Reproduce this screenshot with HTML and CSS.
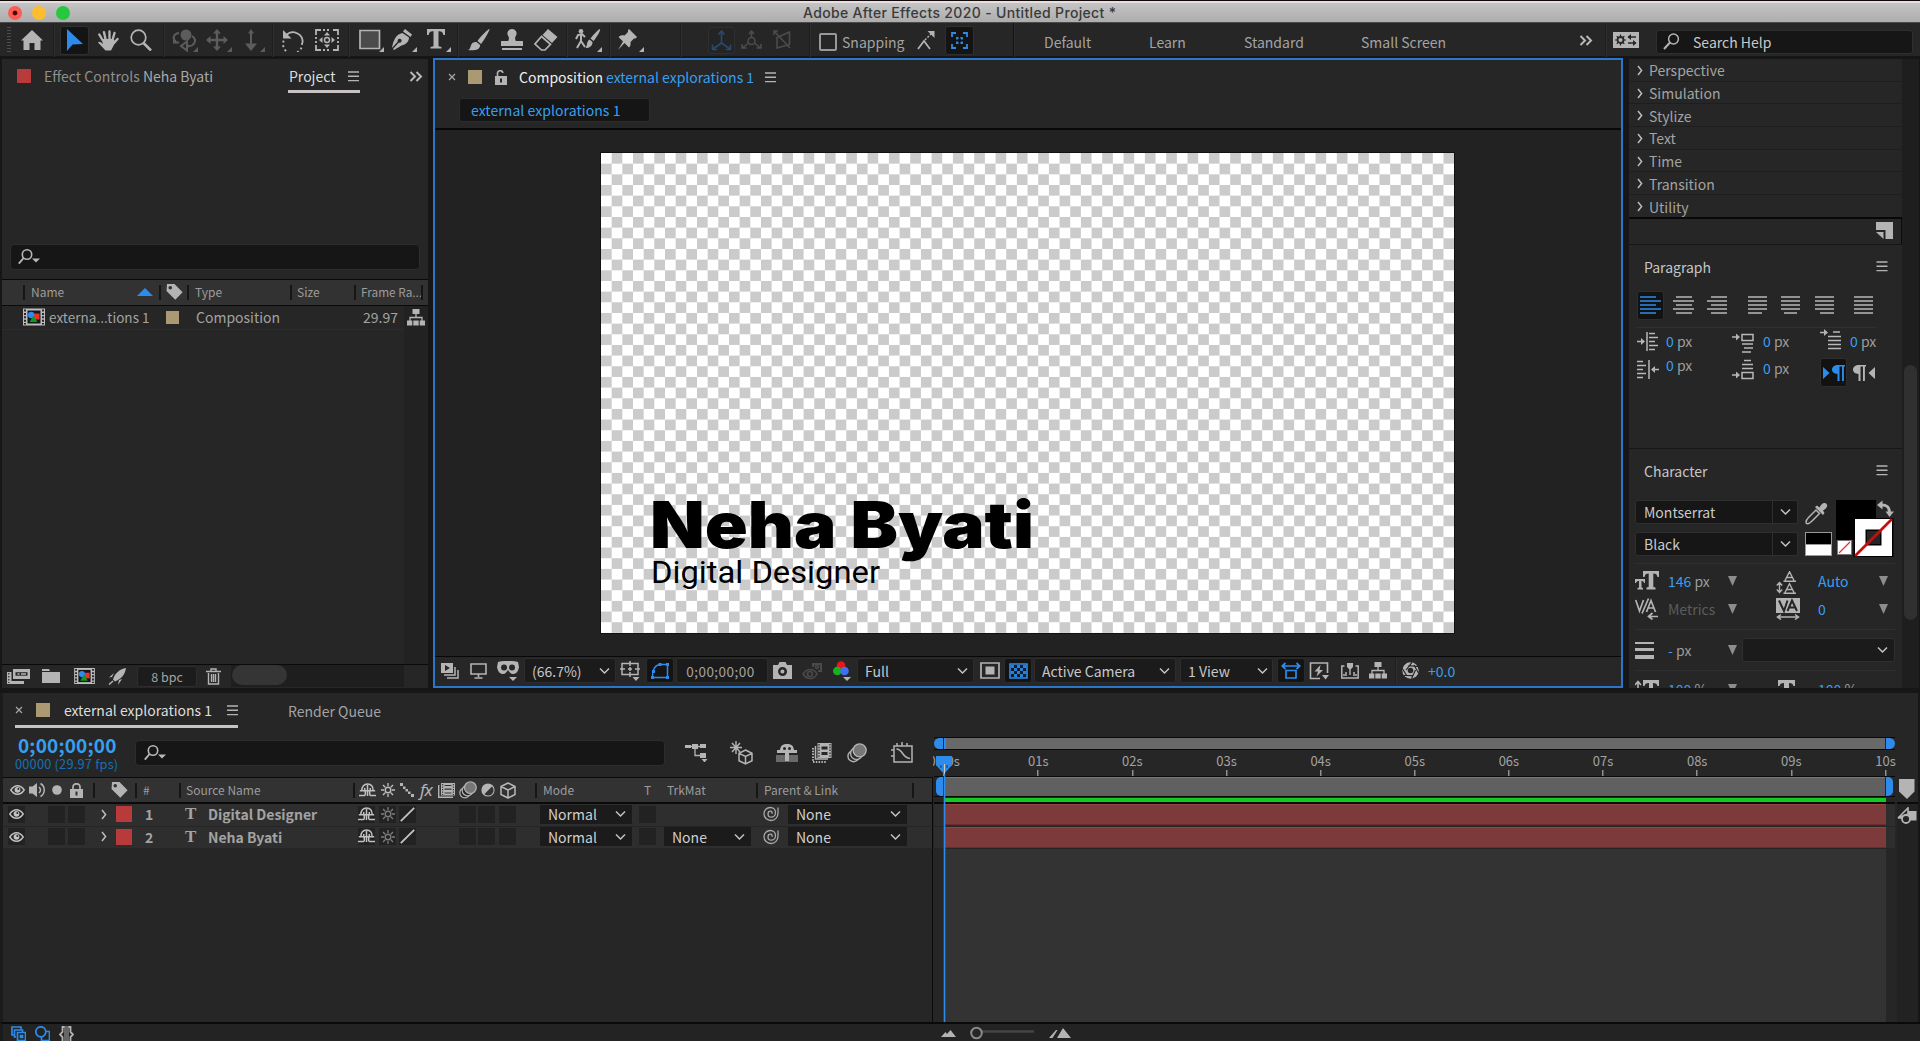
FILE: index.html
```html
<!DOCTYPE html>
<html lang="en">
<head>
<meta charset="utf-8">
<title>Adobe After Effects 2020 - Untitled Project *</title>
<link rel="stylesheet" href="styles.css">
</head>
<body>
<svg class="defs" width="0" height="0">
  <symbol id="chev" viewBox="0 0 11 8"><path d="M1 1.5 5.5 6 10 1.5" fill="none" stroke="#c4c4c4" stroke-width="1.5"/></symbol>
  <symbol id="twirl" viewBox="0 0 6 11"><path d="M1 1 4.6 5.5 1 10" fill="none" stroke="#bdbdbd" stroke-width="1.5"/></symbol>
  <symbol id="menu" viewBox="0 0 11 11"><path d="M0 1h11M0 5.3h11M0 9.6h11" stroke="#b4b4b4" stroke-width="1.4"/></symbol>
  <symbol id="more" viewBox="0 0 14 11"><path d="M1.5 1 6 5.5 1.5 10M7.5 1 12 5.5 7.5 10" fill="none" stroke="#b9b9b9" stroke-width="2"/></symbol>
  <symbol id="close" viewBox="0 0 8 8"><path d="M1 1l6 6M7 1 1 7" stroke="#a8a8a8" stroke-width="1.2"/></symbol>
  <symbol id="find" viewBox="0 0 22 16"><circle cx="9" cy="5.5" r="4.7" fill="none" stroke="#b8b8b8" stroke-width="1.6"/><path d="M5.6 9 .8 14.6" stroke="#b8b8b8" stroke-width="1.9"/><path d="M14 9.5h8l-4 4z" fill="#b8b8b8"/></symbol>
  <symbol id="tag" viewBox="0 0 17 16"><path fill-rule="evenodd" d="M1 0h7.5L16.6 8.2 9.3 15.7.5 7z M4.2 2a1.8 1.8 0 1 0 .1 3.6A1.8 1.8 0 0 0 4.2 2z" fill="#b4b4b4"/></symbol>
  <symbol id="film" viewBox="0 0 22 17"><path d="M0 0h22v17H0z" fill="#bdbdbd"/><path d="M2 1v15M20 1v15" stroke="#262626" stroke-width="2" stroke-dasharray="2 1.4"/><path d="M4.5 2h13v13h-13z" fill="#171717"/><path d="M11 5h5.5v6H11z" fill="#ee2f2f"/><circle cx="8.200" cy="6.500" r="3.200" fill="#2c8df0"/><path d="M10.500 7l4 6.500h-8z" fill="#0f9a20"/></symbol>
  <symbol id="flow" viewBox="0 0 18 17"><path d="M5.5 0h7v5h-7zM0 11.5h5.300v5H0zM6.3 11.5h5.4v5H6.3zM12.700 11.5h5.300v5h-5.300z" fill="#b4b4b4"/><path d="M9 5v4M3 12V8.5h12V12" fill="none" stroke="#b4b4b4" stroke-width="1.3"/></symbol>
  <symbol id="eye" viewBox="0 0 15 10"><path d="M.8 5C3 1.8 5 .8 7.5.8S12 1.8 14.2 5C12 8.2 10 9.2 7.5 9.2S3 8.2.8 5z" fill="none" stroke="#c2c2c2" stroke-width="1.4"/><circle cx="7.5" cy="4.8" r="2.9" fill="#c2c2c2"/><circle cx="8.3" cy="4" r="1" fill="#262626"/></symbol>
  <symbol id="shy" viewBox="0 0 17 15"><path d="M2.800 7.800C2.800 3.500 5.200 1 8.500 1s5.700 2.500 5.700 6.800M.8 7.800h15.400M8.500 2v11M5.700 7.500V5M11.300 7.500V5M0 12.500h6M11 12.500h6M6.300 8v4.500M10.700 8v4.500" fill="none" stroke="#c0c0c0" stroke-width="1.500"/></symbol>
  <symbol id="sun" viewBox="0 0 14 14"><circle cx="7" cy="7" r="2.800" fill="none" stroke="currentColor" stroke-width="1.400"/><path d="M7 0v3M7 11v3M0 7h3M11 7h3M2 2l2.200 2.200M9.800 9.800 12 12M12 2 9.800 4.200M4.200 9.800 2 12" stroke="currentColor" stroke-width="1.300"/></symbol>
  <symbol id="frames" viewBox="0 0 18 15"><path d="M.7 2v12.300H15" fill="none" stroke="#b4b4b4" stroke-width="1.400"/><path d="M3 0h14v12.500H3z" fill="#b4b4b4"/><path d="M4.600 1v11M15.400 1v11" stroke="#323232" stroke-width="1.200" stroke-dasharray="1.300 1.200"/><path d="M6.500 2.500h7M6.500 6.200h7M6.500 10h7" stroke="#323232" stroke-width="1.200"/></symbol>
  <symbol id="blur" viewBox="0 0 19 19"><circle cx="6.200" cy="12.500" r="5.300" fill="#262626" stroke="#b4b4b4" stroke-width="1.300"/><circle cx="9" cy="10" r="5.600" fill="#262626" stroke="#b4b4b4" stroke-width="1.300"/><circle cx="12" cy="7" r="6.200" fill="#777" stroke="#b4b4b4" stroke-width="1.300"/></symbol>
  <symbol id="cube" viewBox="0 0 16 17"><path d="M8 1 15 4.500v8L8 16 1 12.500v-8zM1 4.500 8 8l7-3.500M8 8v8" fill="none" stroke="#b8b8b8" stroke-width="1.500" stroke-linejoin="round"/></symbol>
  <symbol id="spiral" viewBox="0 0 16 16"><path d="M15 1.500v5.500c0 4.200-3 7.500-7 7.500S1 11.500 1 7.800 3.800 1.500 7.200 1.500s5.300 2.300 5.300 5-1.800 4.700-4.200 4.700-3.300-1.500-3.300-3.200S6 5.200 7.500 5.200s1.800 1 1.500 2.600" fill="none" stroke="#a8a8a8" stroke-width="1.300"/></symbol>
  <symbol id="down" viewBox="0 0 9 10"><path d="M0 0h9L4.500 10z" fill="#8d8d8d"/></symbol>
  <symbol id="slash" viewBox="0 0 15 15"><path d="M.8 14.200 14.200.8" stroke="#c4c4c4" stroke-width="1.800"/></symbol>
  <symbol id="pilcrow" viewBox="0 0 13 16"><path d="M6 0C2.500 0 0 1.800 0 4.600S2.400 9 5.500 9V16H7.500V1.500H10V16h1.900V1.500H13V0z" fill="currentColor"/></symbol>
</svg>

<header class="titlebar">
  <div class="lights"><i class="light red"></i><i class="light yellow"></i><i class="light green"></i></div>
  <h1>Adobe After Effects 2020 - Untitled Project *</h1>
</header>

<nav class="toolbar">
  <i class="grip"></i>
  <svg width="22" height="20"><path d="M11 0 22 10.500H19.500V20H13.500V13H8.500v7H2.500V10.500H0z"/></svg>
  <i class="vsep"></i>
  <span class="btn"><svg class="blue" width="17" height="22"><path d="M1 0v22l5.500-6.500L17 15z"/></svg></span>
  <svg width="22" height="21" fill="none" class="stroke"><path d="M5.500 10 2.300 4.500M8.500 9 7 2.200M12.500 9V1.500M15.500 10l2-7M17 13l3.500-4" stroke-width="2.400" stroke-linecap="round"/><path d="M4.500 9h12l2 3-4.500 8.500H8.500L1 12.500c1-1.500 2.500-.5 5 1.500z" class="solid"/></svg>
  <svg width="22" height="22" class="stroke"><circle cx="8.500" cy="8.500" r="7.300" stroke-width="1.700"/><path d="M13.500 14 21 21.500" stroke-width="2.600"/></svg>
  <i class="vsep"></i>
  <svg width="26" height="23" class="dim"><circle cx="14" cy="6" r="5.500"/><path d="M7 4C1 5 0 10 4 12.500M20 7c6 4 2 11-5 10M2 8.500v5h5M15 12.500 9 17l6 4.500z" fill="none" stroke="#5c5c5c" stroke-width="2"/><path d="M26 18v5h-5z"/></svg>
  <svg width="26" height="23" class="dim"><path d="M11 0 15 4.500H12.200v5.300h5.300V7L22 11l-4.500 4v-2.800h-5.300v5.300H15L11 22l-4-4.500h2.800v-5.300H4.500V15L0 11l4.500-4v2.800h5.300V4.500H7z"/><path d="M26 18v5h-5z"/></svg>
  <svg width="24" height="23" class="dim"><path d="M9 0l3 4.500H10v10h5L9 22 3 14.500h5v-10H6z"/><path d="M23 18v5h-5z"/></svg>
  <i class="vsep"></i>
  <svg width="23" height="23" class="stroke"><path d="M4 6.500A9.500 9.500 0 0 1 20.500 14" stroke-width="1.800"/><path d="M1 1v8.500h8.500z" class="solid"/><path d="M20 14A9.500 9.500 0 1 1 2 11" stroke-width="1.900" stroke-dasharray="2 2.600"/></svg>
  <svg width="24" height="22" class="stroke"><path d="M1 6V1h5M18 1h5v5M23 16v5h-5M6 21H1v-5" stroke-width="1.800"/><path d="M8 1h8M8 21h8M1 8v6M23 8v6" stroke-width="1.800" stroke-dasharray="2 2"/><path d="M12 3 15 6.500H9zM12 19l3-3.500H9zM4 11l3.500-3v6zM20 11l-3.500-3v6z" class="solid"/><circle cx="12" cy="11" r="2.500" stroke-width="1.500"/></svg>
  <i class="vsep"></i>
  <svg width="25" height="23"><path d="M1 1.500h19.500v18H1z" fill="#4b4b4b" stroke="#b4b4b4" stroke-width="1.700"/><path d="M25 18v5h-5z"/></svg>
  <svg width="25" height="23"><path d="M13 0 20 5.500 18.500 8 11 2.500zM10.500 4 17 8.500c0 4-3 7-7.500 8L2 21 1 20 6.800 13.500a2 2 0 1 0-1-1L0 19C1 12 4 5 10.500 4z"/><path d="M25 18v5h-5z"/></svg>
  <svg width="24" height="23"><path d="M0 0h18v6h-1.700C16 3.500 15 2.200 11.500 2.200V17.300L14.500 18v1.500h-11V18l3-.7V2.200C3 2.200 2 3.500 1.700 6H0z"/><path d="M24 18v5h-5z"/></svg>
  <i class="vsep"></i>
  <svg width="22" height="22"><path d="M21.500 0C22 1 17 10 13 15L9.500 12C13 7 20 0 21.500 0zM8.500 13l3.700 3C12 21 6 22 0 21c3-1 2-4 4-6.500 1-1.200 3-1.700 4.500-1.500z"/></svg>
  <svg width="22" height="22"><path d="M11 0a4.500 4.500 0 0 1 3.800 7c-1 1.500-1 3 0 5H22v5H0v-5h7.200c1-2 1-3.500 0-5A4.500 4.500 0 0 1 11 0zM1 19h20v2H1z"/></svg>
  <svg width="24" height="22"><path d="M14 0 23.500 8 18 14 8.500 6z"/><path d="M7.500 7.500 16.500 15.300 11 21H7.500L1 15z" fill="none" stroke="#b4b4b4" stroke-width="1.700"/></svg>
  <i class="vsep"></i>
  <svg width="27" height="23"><circle cx="6" cy="2.300" r="2.300"/><path d="M6 5v7L2 19M6 12l4 6M1 10l2-4 4-1 3 3" fill="none" stroke="#b4b4b4" stroke-width="2"/><path d="M25 0C26 1 22 8 18.500 12l-3-2.500C19 5 24 0 25 0zM14.500 10.500l3 2.500c0 4-3 6-7 6 2-2 1-7 4-8.500z"/><path d="M27 18v5h-5z"/></svg>
  <i class="vsep"></i>
  <svg width="26" height="23"><path d="M11 0 19 8 17.500 9.500H16L12.500 13C13 16 12 17.500 11 18.500L6.500 14 0 21l5-8.500L.5 8C2 6.500 4 6 6.500 6.500L10 3V1z"/><path d="M26 18v5h-5z"/></svg>
  <i class="vsep"></i>
  <span class="btn ghost"><svg width="21" height="21" stroke="#264a70" stroke-width="1.600" class="plain"><path d="M10.500 2v11L2 19M10.500 13 19 19M7.500 4.500l3-3.500 3 3.500M1.500 14.500V19.500H6M19.500 14.500v5H15"/></svg></span>
  <svg width="21" height="20" stroke="#4c4c4c" stroke-width="1.600" class="plain"><path d="M10.500 1v6.500M7 13.500 2 17.500M14 13.500l5 4M8 4l2.500-3L13 4M1 14v4h4.500M20 14v4h-4.500"/><circle cx="10.500" cy="11" r="3.500"/></svg>
  <svg width="18" height="20" stroke="#4c4c4c" stroke-width="1.600" class="plain"><path d="M1 5V1h4M1 1l16 17M4 7.500 16.500 2v12.500L4 18z"/></svg>
  <i class="vsep"></i>
  <i class="check"></i>
  <span class="lbl">Snapping</span>
  <svg width="18" height="19"><path d="M1 18l6-8 6 8" fill="none" stroke="#b4b4b4" stroke-width="1.700"/><path d="M8 9 14 3" stroke="#b4b4b4" stroke-width="1.500" stroke-dasharray="2 1.500"/><path d="M10.500 0H17.500V7z"/></svg>
  <span class="btn"><svg width="17" height="17" stroke="#2d8ceb" stroke-width="1.800" class="plain"><path d="M1 5V1h4M12 1h4v4M16 12v4h-4M5 16H1v-4M6 7.500V6h1.500M9.500 6H11v1.500M11 9.500V11H9.500M7.500 11H6V9.500"/></svg></span>
  <i class="vsep strong"></i>
  <span class="lbl">Default</span>
  <span class="lbl">Learn</span>
  <span class="lbl">Standard</span>
  <span class="lbl">Small Screen</span>
  <svg width="14" height="11"><use href="#more"/></svg>
  <i class="vsep"></i>
  <svg width="26" height="16"><path d="M0 0h26v16H0z"/><circle cx="7.500" cy="8" r="3" fill="none" stroke="#262626" stroke-width="1.800"/><path d="M7.500 2.500v11M2 8h11M3.700 4.200l7.600 7.600M11.300 4.200l-7.600 7.600" stroke="#262626" stroke-width="1.200" stroke-dasharray="2.300 6.400"/><path d="M15 5h8M15 11h8" stroke="#262626" stroke-width="1.700"/><path d="M18 2v6l-3.500-3zM20 8v6l3.500-3z" fill="#262626"/></svg>
  <div class="help"><svg width="17" height="17" class="stroke"><circle cx="10.500" cy="6" r="4.900" stroke-width="1.500"/><path d="M7 9.500 1 16" stroke-width="2"/></svg><span>Search Help</span></div>
</nav>

<main class="workspace">
  <section class="panel project">
    <div class="project-tabs">
      <i class="sw red"></i>
      <span class="muted">Effect Controls <b>Neha Byati</b></span>
      <span class="tab"><span>Project</span><svg width="11" height="11"><use href="#menu"/></svg></span>
      <svg width="14" height="11"><use href="#more"/></svg>
    </div>
    <div class="field project-search"><svg width="22" height="16"><use href="#find"/></svg></div>
    <div class="project-head">
      <i></i><span>Name</span><svg width="16" height="8"><path d="M0 8 8 0l8 8z" fill="#2d8ceb"/></svg>
      <i></i><svg width="17" height="16"><use href="#tag"/></svg>
      <i></i><span>Type</span><i></i><span>Size</span><i></i><span>Frame Ra...</span><i></i>
    </div>
    <div class="project-body">
      <div class="project-list">
        <div class="project-row">
          <svg width="22" height="18"><use href="#film"/></svg><span>externa...tions 1</span><i class="sw tan"></i><span>Composition</span><span>29.97</span>
        </div>
      </div>
      <div class="project-gutter"><svg width="18" height="17"><use href="#flow"/></svg></div>
    </div>
    <div class="project-foot">
      <svg width="23" height="15"><path d="M6 0h17v10H6z"/><path d="M8.500 3.200h12v3.500h-12z" fill="#262626"/><path d="M10.500 5h2M14 5h5" stroke="#b4b4b4" stroke-width="1.500"/><path d="M0 3h4.500v9H17v3H0z"/><path d="M1.800 4v10" stroke="#262626" stroke-width="1.200" stroke-dasharray="1.500 1.500"/></svg>
      <svg width="18" height="14"><path d="M0 0h7l1 2H0zM0 3h18v11H0z"/></svg>
      <svg width="23" height="16"><use href="#film"/></svg>
      <svg width="18" height="17"><path d="M18 0C12 1 7 5 5 11.500l2 2C13 11 17 7 18 0zM6 5 1 9.500 4 9zM11 12l-1 5 4-6z"/><path d="M5 13l-4 3.500" stroke="#b4b4b4" stroke-width="1.500"/></svg>
      <span class="bpc">8 bpc</span>
      <svg width="15" height="17" class="stroke"><path d="M2.500 5v11h10V5M0 3.500h15M5 3V1h5v2M5.500 6v8M7.500 6v8M9.500 6v8" stroke-width="1.400"/></svg>
      <div class="hscroll"><i></i></div>
    </div>
  </section>

  <section class="comp">
    <div class="comp-tabs">
      <svg width="8" height="8"><use href="#close"/></svg>
      <i class="sw tan"></i>
      <svg width="12" height="15"><path d="M0 6h12v9H0z"/><path d="M2.500 6V3.800a2.700 2.700 0 0 1 5.400-.8" fill="none" stroke="#b4b4b4" stroke-width="1.600"/><path d="M6 8.500v4" stroke="#262626" stroke-width="2"/></svg>
      <span class="white">Composition</span>
      <span class="bluetext">external explorations 1</span>
      <svg width="11" height="11"><use href="#menu"/></svg>
    </div>
    <div class="crumb">external explorations 1</div>
    <div class="viewer">
      <svg class="canvas" width="853" height="480">
        <text class="name" x="49" y="395" textLength="384" lengthAdjust="spacingAndGlyphs">Neha Byati</text>
        <text class="role" x="50" y="430" textLength="229" lengthAdjust="spacingAndGlyphs">Digital Designer</text>
      </svg>
    </div>
    <div class="comp-foot">
      <svg width="18" height="16"><path fill-rule="evenodd" d="M0 0h12v10H0zM4 2v6l5-3z"/><path d="M14 4v8H3M17 7v8H6" fill="none" stroke="#b4b4b4" stroke-width="1.500"/></svg>
      <svg width="17" height="16" class="stroke"><path d="M1 1h15v10H1zM4.500 15h8M8.500 11v3" stroke-width="1.600"/></svg>
      <svg width="22" height="20"><path fill-rule="evenodd" d="M1 1C7-.5 15-.5 21 1l1 5c-1 5-3 7-6 7-2.500 0-3.500-2-5-4-1.500 2-2.500 4-5 4C3 13 1 11 0 6zM7 3.500a3 3 0 1 0 .1 6 3 3 0 0 0-.1-6zM15 3.500a3 3 0 1 0 .1 6 3 3 0 0 0-.1-6zM12 16h8l-4 4z"/></svg>
      <div class="drop zoomlevel"><span>(66.7%)</span><svg width="11" height="8"><use href="#chev"/></svg></div>
      <svg width="20" height="20"><path d="M2 2.500h16v11H2zM10 0v5M10 11v5M0 8h5M15 8h5M8 8h4M10 6v4" fill="none" stroke="#b4b4b4" stroke-width="1.500"/><path d="M12.500 16h7l-3.500 4z"/></svg>
      <span class="fbtn"><svg width="20" height="18"><path d="M2.500 15.500C2 8 5 3 10 2.500h7.500v13z" fill="none" stroke="#2d8ceb" stroke-width="1.500"/><path d="M1 14h3v3H1zM8.500 1h3v3h-3zM16 1h3v3h-3zM16 14h3v3h-3zM2 8h3v3H2z" fill="#2d8ceb"/></svg></span>
      <span class="drop time">0;00;00;00</span>
      <svg width="19" height="17"><path fill-rule="evenodd" d="M0 3h5l1.500-3h6L14 3h5v14H0zM9.500 5a4.500 4.500 0 1 0 .1 9 4.500 4.500 0 0 0-.1-9zM9.500 7.500a2 2 0 1 1-.1 4 2 2 0 0 1 .1-4z"/></svg>
      <svg width="22" height="18" class="stroke"><g stroke="#4a4a4a"><path d="M1 12c4-6 11-6 14 0-3 6-10 6-14 0z" stroke-width="1.600"/><circle cx="8" cy="12" r="2.500" stroke-width="1.600"/><path d="M11 5V2h8v7h-3" stroke-width="2"/><circle cx="15" cy="5" r="1.500" stroke-width="1.500"/></g></svg>
      <svg width="18" height="20"><circle cx="8" cy="4.500" r="4.300" fill="#f01515"/><circle cx="4.300" cy="10" r="4.300" fill="#14b51c"/><circle cx="11.500" cy="10" r="4.300" fill="#3f6ff5"/><path d="M10 16h8l-4 4z"/></svg>
      <div class="drop"><span>Full</span><svg width="11" height="8"><use href="#chev"/></svg></div>
      <svg width="20" height="17"><path d="M1 1h18v15H1z" fill="none" stroke="#b4b4b4" stroke-width="1.700"/><path d="M5.500 4.500h9v8h-9z"/></svg>
      <span class="fbtn"><svg width="19" height="16"><path d="M1 1h17v14H1z" fill="#101c2b" stroke="#2d8ceb" stroke-width="1.600"/><path d="M2 2h3v3H2zM8 2h3v3H8zM14 2h3v3h-3zM5 5h3v3H5zM11 5h3v3h-3zM2 8h3v3H2zM8 8h3v3H8zM14 8h3v3h-3zM5 11h3v3H5zM11 11h3v3h-3z" fill="#2d7fd2"/></svg></span>
      <div class="drop"><span>Active Camera</span><svg width="11" height="8"><use href="#chev"/></svg></div>
      <div class="drop"><span>1 View</span><svg width="11" height="8"><use href="#chev"/></svg></div>
      <span class="fbtn"><svg width="20" height="17" stroke="#2d8ceb" stroke-width="1.700" class="plain"><path d="M5 8.500h10v7.500H5zM2 4h16M4.500 1 1.200 4l3.300 3M15.500 1l3.300 3-3.300 3"/></svg></span>
      <svg width="21" height="18"><path d="M11 16.500H1.500V1h17v10" fill="none" stroke="#b4b4b4" stroke-width="1.600"/><path d="M11.500 3 5.500 9.500H9L7.500 14.500 14 8H10.500zM13 13h7l-3.500 4.500z"/></svg>
      <svg width="18" height="16"><path d="M6 0h6v4l-3 3-3-3zM8.300 6h1.400v6H8.300z"/><path d="M3.500 3H.8v12h16.400V3h-2.700M5 9v4M13 9v4M3 11v2M15 11v2" fill="none" stroke="#b4b4b4" stroke-width="1.500"/></svg>
      <svg width="18" height="17"><use href="#flow"/></svg>
      <i class="vsep"></i>
      <svg width="17" height="17"><circle cx="8.500" cy="8.500" r="8.200"/><path d="M10 .3 4 8M16 4.500l-9.500-.8M16.500 11 12 3M9.500 16.700 13.500 8M2 13.500l9 .2M.3 6.500 5 14" stroke="#262626" stroke-width="1.200"/><circle cx="8.500" cy="8.500" r="2.800" fill="#262626"/></svg>
      <span class="bluetext">+0.0</span>
    </div>
  </section>

  <aside class="side">
    <div class="stack">
      <ul class="effects">
        <li><svg width="6" height="11"><use href="#twirl"/></svg>Perspective</li>
        <li><svg width="6" height="11"><use href="#twirl"/></svg>Simulation</li>
        <li><svg width="6" height="11"><use href="#twirl"/></svg>Stylize</li>
        <li><svg width="6" height="11"><use href="#twirl"/></svg>Text</li>
        <li><svg width="6" height="11"><use href="#twirl"/></svg>Time</li>
        <li><svg width="6" height="11"><use href="#twirl"/></svg>Transition</li>
        <li><svg width="6" height="11"><use href="#twirl"/></svg>Utility</li>
      </ul>
      <div class="effects-foot"><svg width="17" height="17"><path d="M0 0h17v17H9.500V8H0z"/><path d="M0 10h7.500v7z"/></svg></div>
      <div class="paragraph">
        <div class="side-title"><span>Paragraph</span><svg width="12" height="11"><use href="#menu"/></svg></div>
        <div class="aligns">
          <span class="abtn"><svg width="21" height="19" class="lines blue"><path d="M0 1h16M0 5h21M0 9h16M0 13h21M0 17h16"/></svg></span>
          <svg width="21" height="19" class="lines"><path d="M3 1h16M0 5h21M3 9h16M0 13h21M3 17h16"/></svg>
          <svg width="20" height="19" class="lines"><path d="M4 1h16M0 5h20M4 9h16M0 13h20M4 17h16"/></svg>
          <svg width="19" height="19" class="lines"><path d="M0 1h19M0 5h19M0 9h19M0 13h19M0 17h14"/></svg>
          <svg width="19" height="19" class="lines"><path d="M0 1h19M0 5h19M0 9h19M0 13h19M3 17h13"/></svg>
          <svg width="19" height="19" class="lines"><path d="M0 1h19M0 5h19M0 9h19M0 13h19M5 17h14"/></svg>
          <svg width="19" height="19" class="lines"><path d="M0 1h19M0 5h19M0 9h19M0 13h19M0 17h19"/></svg>
        </div>
        <div class="indents">
          <svg width="22" height="19" class="lines"><path d="M0 9.500h6M10 0v19M12 1.500h6M12 5.500h9M12 9.500h6M12 13.500h9M12 17.500h6"/><path d="M4 6l4 3.500-4 3.500z" class="solid"/></svg>
          <span><b>0</b> px</span>
          <svg width="22" height="21" class="lines space-before"><path d="M0 4h5M10 1.500h11v6H10zM10 11h11M12 15h9M10 19h9"/><path d="M4 .5 8 4 4 7.500z" class="solid"/></svg>
          <span><b>0</b> px</span>
          <svg width="22" height="21" class="lines first-line"><path d="M0 3.500h5M13 3h7M8 7.500h13M8 11.500h13M8 15.500h13M8 19.500h13"/><path d="M4 0l4 3.500L4 7z" class="solid"/></svg>
          <span><b>0</b> px</span>
        </div>
        <div class="indents second">
          <svg width="22" height="19" class="lines"><path d="M16 9.500h6M12 0v19M0 1.500h6M0 5.500h9M0 9.500h6M0 13.500h9M0 17.500h6"/><path d="M18 6l-4 3.500 4 3.500z" class="solid"/></svg>
          <span><b>0</b> px</span>
          <svg width="22" height="21" class="lines"><path d="M0 16h5M10 13.500h11v6H10zM12 1.500h7M10 5.500h11M10 9.500h11"/><path d="M4 12.500 8 16 4 19.500z" class="solid"/></svg>
          <span><b>0</b> px</span>
          <span class="abtn dir"><svg width="22" height="16" class="blue"><path d="M0 2l6.500 6L0 14z"/><svg x="9" width="13" height="16" class="blue"><use href="#pilcrow"/></svg></svg></span>
          <svg width="22" height="16" class="rtl"><path d="M22 2l-6.500 6 6.500 6z"/><svg width="13" height="16"><use href="#pilcrow"/></svg></svg>
        </div>
      </div>
      <div class="character">
        <div class="side-title"><span>Character</span><svg width="12" height="11"><use href="#menu"/></svg></div>
        <div class="fontrow">
          <div class="fontpicks">
            <div class="pick"><span>Montserrat</span><i></i><svg width="11" height="8"><use href="#chev"/></svg></div>
            <div class="pick"><span>Black</span><i></i><svg width="11" height="8"><use href="#chev"/></svg></div>
          </div>
          <div class="dropper">
            <svg width="23" height="23"><path d="M1.500 21.500c-1-2 0-4 2-6L11 8l3.500 3.500L7 19c-2 2-4 3.500-5.500 2.500z" fill="none" stroke="#b4b4b4" stroke-width="1.500"/><path d="M10 5l2-1.500 2.500 2C16 2.500 18.500 0 21 1.500s1 5-3 7l1.500 2.500L18 13z"/></svg>
            <i class="bw"></i>
          </div>
          <svg class="fillstroke" width="60" height="58"><path d="M0 0h40v40H0z" fill="#000"/><path d="M46 5c5 0 7.500 2 7.500 8" fill="none" stroke="#b4b4b4" stroke-width="3"/><path d="M46.500.5v9L41 5zM49.500 11.500h8.500L53.500 17z"/><path d="M1.500 40.500h14v14h-14z" fill="#fff" stroke="#777" stroke-width="1"/><path d="M3 53 14 42" stroke="#e03434" stroke-width="1.300"/><path d="M17.500 18h40v39h-40z" fill="#000"/><path d="M19 19h37v37H19z" fill="#fff"/><path d="M29.500 29.500h16v16h-16z" fill="#000"/><path d="M31 31h13v13H31z" fill="#262626"/><path d="M19 56 56 19" stroke="#c80d0d" stroke-width="2.600"/></svg>
        </div>
        <div class="metrics">
          <svg width="24" height="20"><path d="M8 0h16v6h-1.500C22 3.500 21 2.500 18.300 2.500V16l2.200.6V18.500h-9v-1.900l2.200-.6V2.500C11 2.500 10 3.500 9.500 6H8zM0 8h10v4H9C8.700 10.500 8 10 6.500 10v6.500l1.500.5v1.500H2.500V17l1.500-.5V10C2.500 10 1.500 10.500 1 12H0z"/></svg>
          <span><b>146</b> px</span><svg width="9" height="10"><use href="#down"/></svg>
          <svg width="21" height="23" class="stroke leading"><path d="M3.500 12v9M.8 14.500 3.500 11.500l2.700 3M.8 18.500l2.700 3 2.700-3M9 9.500 13.500.8 18 9.500M10.500 6.500h6M7.500 10.200h12.500M9 21.500l4.500-8.700 4.500 8.700M10.500 18.500h6M7.500 22.200h12.500" stroke-width="1.400"/></svg>
          <span><b>Auto</b></span><svg width="9" height="10"><use href="#down"/></svg>
        </div>
        <div class="metrics second">
          <svg width="23" height="22" class="stroke"><path d="M.7 2 4.500 13 8.500 2M13.500.5 7 15.500M11.500 14 16 2.500 20.500 14M13 10h6M14 18.500h9M17.500 15 13.500 18.500l4 3" stroke-width="1.700"/></svg>
          <span class="off">Metrics</span><svg width="9" height="10"><use href="#down"/></svg>
          <svg width="24" height="22"><path d="M0 0h24v15H0z"/><path d="M3 2.500 8 13l3.500-10.500M11.500 13 16 2.500 21 13M13.500 9.500h6" fill="none" stroke="#262626" stroke-width="2"/><path d="M2 19h20M5 16.500 1.500 19 5 21.500M19 16.500l3.500 2.500-3.500 2.500" fill="none" stroke="#b4b4b4" stroke-width="1.500"/></svg>
          <span><b>0</b></span><svg width="9" height="10"><use href="#down"/></svg>
        </div>
        <div class="strokes">
          <svg width="19" height="17"><path d="M0 0h19v2H0zM0 6h19v3H0zM0 13h19v4H0z"/></svg>
          <span><b>-</b> px</span><svg width="9" height="10"><use href="#down"/></svg>
          <div class="pick"><svg width="11" height="8"><use href="#chev"/></svg></div>
        </div>
        <div class="scales">
          <svg width="24" height="20"><path d="M3 12V2M0 5 3 1.500 6 5" fill="none" stroke="#b4b4b4" stroke-width="1.600"/><path d="M8 0h16v6h-1.500C22 4 21 3 18 3v15h-4V3c-3 0-4 1-4.500 3H8z"/></svg>
          <span><b>100</b> %</span><svg width="9" height="10"><use href="#down"/></svg>
          <svg width="18" height="20"><path d="M0 0h17v6h-1.500C15 4 14 3 11 3v15H6V3C3 3 2 4 1.500 6H0z"/></svg>
          <span><b>100</b> %</span>
        </div>
      </div>
    </div>
    <div class="vscroll"><i></i></div>
  </aside>
</main>

<section class="timeline">
  <div class="layers">
    <div class="tl-tabs">
      <span class="tab"><svg width="8" height="8"><use href="#close"/></svg><i class="sw tan"></i><span>external explorations 1</span><svg width="11" height="11"><use href="#menu"/></svg></span>
      <span class="lbl">Render Queue</span>
    </div>
    <div class="tl-tools">
      <div class="clock"><strong>0;00;00;00</strong><small>00000 (29.97 fps)</small></div>
      <div class="field"><svg width="22" height="16"><use href="#find"/></svg></div>
      <svg width="23" height="19"><path d="M0 2h6v3H0zM7 1h6v5H7zM15 1h6v4h-6zM15 10h6v5h-6z"/><path d="M5 3.500h10M10 5v7.500h5" fill="none" stroke="#b4b4b4" stroke-width="1.300"/><path d="M16.500 16h6l-3 3.500z"/></svg>
      <svg width="23" height="24"><path d="M6 0v13M0 6.500h12M2 2l8 9M10 2 2 11" stroke="#b4b4b4" stroke-width="1.400"/><path d="M15.500 9 22 12.300v7.400L15.500 23 9 19.700v-7.400zM9 12.300l6.500 3.200 6.500-3.200M15.500 15.500V23" fill="#262626" stroke="#b4b4b4" stroke-width="1.500"/></svg>
      <svg width="22" height="18"><path d="M0 11h22v7H0z" fill="#6a6a6a"/><path d="M4 6C4.500 1.500 7 0 11 0s6.500 1.500 7 6h3v3h-8v8H9V9H1V6z"/><circle cx="8.500" cy="4.500" r="1.500" fill="#262626"/><circle cx="13.500" cy="4.500" r="1.500" fill="#262626"/></svg>
      <svg width="20" height="20"><path d="M1 5v14h13" fill="none" stroke="#b4b4b4" stroke-width="2" stroke-dasharray="1.500 1.300"/><path d="M3.500 3v13H16" fill="none" stroke="#b4b4b4" stroke-width="1.500"/><path d="M5.500 0h14v15h-14z"/><path d="M7 1v13M18 1v13" stroke="#262626" stroke-width="1.200" stroke-dasharray="1.500 1.300"/><path d="M9.500 3.500h6v3h-6zM9.500 9h6v3h-6z" fill="#262626"/></svg>
      <svg width="20" height="20"><use href="#blur"/></svg>
      <svg width="22" height="21" class="stroke"><path d="M3 4h18v16H3zM3 8H0M3 14H0M6 4V1M11 4V0M16 4V1M5.500 7C12 7 11 16 19 16.500" stroke-width="1.500"/></svg>
    </div>
    <div class="tl-head">
      <svg width="15" height="10"><use href="#eye"/></svg>
      <svg width="16" height="16"><path d="M0 4.500h3.500L8 1v14L3.500 11.500H0z"/><path d="M10 5c2 2 2 4 0 6M11.500 1.500c5 3 5 10 0 13" fill="none" stroke="#b4b4b4" stroke-width="1.500"/></svg>
      <svg width="10" height="10"><circle cx="5" cy="5" r="4.800"/></svg>
      <svg width="13" height="15"><path d="M0 6h13v9H0z"/><path d="M3 6V4a3.500 3.200 0 0 1 7 0v2" fill="none" stroke="#b4b4b4" stroke-width="1.700"/><path d="M6.500 8.500v4" stroke="#323232" stroke-width="2"/></svg>
      <i></i><svg width="17" height="16"><use href="#tag"/></svg><i></i><span>#</span><i></i><span>Source Name</span><i></i>
      <svg width="17" height="15"><use href="#shy"/></svg>
      <svg width="14" height="14" class="sun"><use href="#sun"/></svg>
      <svg width="14" height="14"><path d="M0 0h3v3H0zM3 3.500h2.500V6H3zM5.500 6H8v2.500H5.500zM8 8.500h2.500V11H8zM11 11h3v3h-3z"/></svg>
      <em>fx</em>
      <svg width="18" height="15"><use href="#frames"/></svg>
      <svg width="18" height="18"><use href="#blur"/></svg>
      <svg width="14" height="14"><circle cx="7" cy="7" r="6.600"/><path d="M11 3.500 3.500 11A5.200 5.200 0 0 0 11 3.500z" fill="#323232"/></svg>
      <svg width="16" height="17"><use href="#cube"/></svg>
      <i></i><span>Mode</span><span>T</span><span>TrkMat</span><i></i><span>Parent &amp; Link</span><i></i>
    </div>
    <div class="tl-row">
      <span class="cell"><svg width="15" height="10"><use href="#eye"/></svg></span><span class="cell"></span><span class="cell"></span>
      <svg width="6" height="11"><use href="#twirl"/></svg><i class="sw red"></i><b>1</b><b class="ttype">T</b><b>Digital Designer</b>
      <span class="cell"><svg width="17" height="15"><use href="#shy"/></svg></span><span class="cell"><svg width="14" height="14" class="sun off"><use href="#sun"/></svg></span><span class="cell"><svg width="15" height="15"><use href="#slash"/></svg></span>
      <span class="cell"></span><span class="cell"></span><span class="cell"></span>
      <div class="flat"><span>Normal</span><svg width="11" height="8"><use href="#chev"/></svg></div>
      <span class="cell"></span><span></span>
      <svg width="16" height="16"><use href="#spiral"/></svg>
      <div class="flat"><span>None</span><svg width="11" height="8"><use href="#chev"/></svg></div>
    </div>
    <div class="tl-row">
      <span class="cell"><svg width="15" height="10"><use href="#eye"/></svg></span><span class="cell"></span><span class="cell"></span>
      <svg width="6" height="11"><use href="#twirl"/></svg><i class="sw red"></i><b>2</b><b class="ttype">T</b><b>Neha Byati</b>
      <span class="cell"><svg width="17" height="15"><use href="#shy"/></svg></span><span class="cell"><svg width="14" height="14" class="sun off"><use href="#sun"/></svg></span><span class="cell"><svg width="15" height="15"><use href="#slash"/></svg></span>
      <span class="cell"></span><span class="cell"></span><span class="cell"></span>
      <div class="flat"><span>Normal</span><svg width="11" height="8"><use href="#chev"/></svg></div>
      <span class="cell"></span>
      <div class="flat trk"><span>None</span><svg width="11" height="8"><use href="#chev"/></svg></div>
      <svg width="16" height="16"><use href="#spiral"/></svg>
      <div class="flat"><span>None</span><svg width="11" height="8"><use href="#chev"/></svg></div>
    </div>
    <div class="tl-rest"></div>
  </div>

  <div class="tracks">
    <div class="navigator"><i class="handle"></i><i class="bar"></i><i class="handle end"></i></div>
    <div class="ruler"><span>0:00s</span><span>01s</span><span>02s</span><span>03s</span><span>04s</span><span>05s</span><span>06s</span><span>07s</span><span>08s</span><span>09s</span><span>10s</span></div>
    <div class="workarea"><i class="handle"></i><i class="bar"></i><i class="handle end"></i></div>
    <div class="cache"><i></i></div>
    <div class="track"><i></i></div>
    <div class="track"><i></i></div>
    <div class="empty"><i></i></div>
    <svg class="playhead" width="17" height="266"><path d="M0 0h16v9L8 18 0 9z" fill="#2d8ceb"/><path d="M5 9v3M11 9v3" stroke="#10355c" stroke-width="1"/><path d="M8.500 8v258" stroke="#c9c9c9" stroke-width="1"/><path d="M8.500 18v248" stroke="#2d8ceb" stroke-width="1.600"/></svg>
  </div>

  <div class="rail">
    <div class="rail-head"><svg width="16" height="20"><path d="M0 0h15.500v12.500L8 20 0 12.500z"/></svg></div>
    <div class="rail-body"><svg width="20" height="17"><path d="M9 4h10.500v9.500H9z"/><path d="M1 11 11 1v6zM1 11h8" fill="#232323" stroke="#b4b4b4" stroke-width="1.600"/><circle cx="9" cy="12" r="4" fill="#232323" stroke="#b4b4b4" stroke-width="1.800"/></svg></div>
  </div>

  <footer class="tl-foot">
    <svg width="15" height="15" stroke="#2d8ceb" stroke-width="1.700" class="plain"><path d="M3 9H1V1h9v2M5 11H3.500V4h8v2M6.500 6.500h8v8h-8z"/><path d="M9.500 9.500h2v2h-2z" fill="#2d8ceb"/></svg>
    <svg width="15" height="15" stroke="#2d8ceb" stroke-width="1.700" class="plain"><circle cx="5.800" cy="5.800" r="5"/><path d="M10 5.500h4.500v9h-8V11"/></svg>
    <svg width="15" height="15"><path d="M5 0h5v15H5z" fill="#666"/><path d="M5.500 1H3.500v5L1 8.500 3.500 11v5M9.500 1h2v5L14 8.500 11.500 11v5" fill="none" stroke="#b4b4b4" stroke-width="1.800"/></svg>
    <svg width="15" height="7"><path d="M0 7 4.500 2 6 4 9.500 0 15 7z"/></svg>
    <svg width="64" height="14"><path d="M12 5.500h52" stroke="#454545" stroke-width="2.400"/><circle cx="6.500" cy="7" r="5.300" fill="#262626" stroke="#8a8a8a" stroke-width="2"/></svg>
    <svg width="22" height="10"><path d="M8 10 14 0l8 10zM0 10 7 2l1.500 0L3.500 10z"/></svg>
  </footer>
</section>
</body>
</html>
```
FILE: styles.css
```css
* { box-sizing: border-box; }

body {
  margin: 0;
  width: 1920px;
  height: 1041px;
  overflow: hidden;
  display: flex;
  flex-direction: column;
  background: #161616;
  color: #a3a3a3;
  font: 14px/20px "Noto Sans CJK SC", "Open Sans", sans-serif;
  white-space: nowrap;
}

svg { display: block; fill: #b4b4b4; flex: none; }
svg.defs { position: absolute; }
svg.dim { fill: #5c5c5c; }
svg.blue { fill: #2d8ceb; color: #2d8ceb; }
svg.rtl { color: #b4b4b4; }
svg.plain { fill: none; }
svg.stroke { fill: none; stroke: #b4b4b4; }
svg .solid { fill: #b4b4b4; stroke: none; }
svg.lines { fill: none; stroke: #b8b8b8; stroke-width: 1.5; }
svg.lines.blue { stroke: #2d8ceb; fill: none; }
svg.sun { color: #c0c0c0; }
svg.sun.off { color: #7d7d7d; }
b { font-weight: 400; }

.white { color: #f0f0f0; }
.bluetext { color: #389ff0; }
.sw { display: block; width: 14px; height: 14px; }
.sw.red { background: #b93a3a; }
.sw.tan { background: #ab9974; }
.vsep { display: block; width: 2px; height: 34px; background: #1e1e1e; border-right: 1px solid #2f2f2f; }
.vsep.strong { background: #111; }

/* window title */
.titlebar {
  height: 23px;
  flex: none;
  display: grid;
  grid-template-columns: 803px 1fr;
  align-items: center;
  background: linear-gradient(#120808 0 1px, #e4e0e2 1px 2.500px, #c4c4c4 3px, #adadad 22px, #4a4a4a 22px);
  padding-top: 2px;
}
.titlebar h1 { margin: 0; font: 500 14px/18px Inter, sans-serif; color: #3a3a3a; letter-spacing: .34px; }
.lights { display: flex; gap: 10px; padding-left: 8px; }
.light { width: 14px; height: 14px; border-radius: 50%; }
.light.red { background: radial-gradient(circle, #4c0802 0 2px, #fd5c55 2.800px); }
.light.yellow { background: #fdbd2e; }
.light.green { background: #27c840; }

/* tools */
.toolbar {
  height: 33px;
  flex: none;
  background: #262626;
  padding: 0 0 2px 7px;
  display: grid;
  grid-template-columns: 14px 32px 7px 37px 33px 33px 9px 34px 36px 30px 10px 33px 33px 11px 33px 35px 30px 11px 33px 33px 32px 9px 34px 9px 62px 28px 33px 32px 36px 10px 23px 75px 28px 68px 31px 105px 95px 117px 218px 26px 8px 43px 257px;
  align-items: center;
}
.grip { width: 4px; height: 26px; background: repeating-linear-gradient(#4d4d4d 0 1px, #262626 1px 3px); }
.btn { width: 29px; height: 29px; display: flex; align-items: center; justify-content: center; background: #141414; border: 1px solid #2f2f2f; border-radius: 3px; }
.btn.ghost { width: 27px; height: 27px; background: #242424; }
.toolbar .lbl { padding-top: 3px; }
.check { width: 18px; height: 18px; border: 2px solid #999; border-radius: 2px; margin-top: 3px; }
.help { height: 24px; display: flex; align-items: center; gap: 13px; padding-left: 6px; background: #161616; border: 1px solid #2e2e2e; border-radius: 3px; color: #c9c9c9; margin-top: 3px; }

/* panels */
.workspace { flex: none; height: 637px; padding-top: 2px; display: grid; grid-template-columns: 433px 1190px 297px; }
.panel { margin: 1px 5px 6px 2px; background: #262626; height: 629px; display: flex; flex-direction: column; }

.project-tabs { height: 34px; padding: 0 0 0 15px; display: grid; grid-template-columns: 27px 244px 121px 20px; align-items: center; }
.muted { color: #8e8e8e; }
.muted b { color: #a9a9a9; }
.tab { display: flex; align-items: center; color: #ddd; border-bottom: 3px solid #c9c2c4; justify-self: start; }
.project-tabs .tab { width: 72px; height: 28px; gap: 12px; padding-left: 1px; margin-top: 6px; padding-bottom: 3px; align-items: center; }
.field { background: #161616; border: 1px solid #2d2d2d; border-radius: 4px; display: flex; align-items: center; height: 26px; }
.project-search { margin: 151px 8px 0; padding-left: 7px; width: 410px; }

.project-head {
  margin-top: 9px; height: 27px; padding: 0 0 1px 21px;
  border-top: 1px solid #0a0a0a; border-bottom: 1px solid #0a0a0a; background: #323232;
  display: grid; grid-template-columns: 8px 106px 22px 7px 21px 8px 95px 7px 57px 7px 60px 2px; align-items: center;
  font-size: 12px; color: #9c9c9c;
}
.project-head span:nth-of-type(4) { font-size: 11.800px; }
.project-head i, .tl-head i { width: 2px; height: 15px; background: #161616; }
.project-body { flex: 1; display: flex; }
.project-list { width: 402px; }
.project-gutter { flex: 1; background: #222; padding: 3px 0 0 3px; }
.project-row { height: 24px; padding: 0 0 1px 21px; display: grid; grid-template-columns: 26px 117px 30px 167px 40px; align-items: center; border-bottom: 1px solid #2c2c2c; }
.project-row .sw { width: 13px; height: 13px; }
.project-row span:nth-child(2) { font-size: 13.500px; letter-spacing: .05px; }
.project-foot { height: 24px; padding: 0 0 4px 5px; display: grid; grid-template-columns: 35px 31px 35px 29px 69px 25px 1fr; align-items: center; border-top: 1px solid #0a0a0a; }
.bpc { width: 60px; height: 21px; line-height: 20px; background: #1c1c1c; border: 1px solid #2d2d2d; border-radius: 3px; text-align: center; font-size: 12.500px; }
.hscroll { height: 22px; width: 173px; background: #1e1e1e; }
.hscroll i { display: block; width: 55px; height: 20px; border-radius: 10px; background: #353535; margin-left: 1px; }

/* composition viewer */
.comp { height: 630px; border: 2px solid #2a76c9; background: #262626; display: flex; flex-direction: column; }
.comp-tabs { height: 34px; padding-left: 13px; display: grid; grid-template-columns: 20px 27px 24px 87px 159px 20px; align-items: center; }
.crumb { width: 191px; height: 24px; margin: 4px 0 6px 24px; padding-left: 11px; line-height: 22px; background: #151515; border: 1px solid #2c2c2c; border-radius: 3px; color: #389ff0; letter-spacing: .06px; }
.viewer { flex: none; height: 528px; background: #222; border-top: 2px solid #080808; padding: 23px 0 0 166px; }
.canvas { background: repeating-conic-gradient(#cbcbcb 0 25%, #fff 0 50%) 0 0 / 21.333px 21.333px; outline: 1px solid #111; fill: #000; }
.canvas .name { font: 900 64px Inter, sans-serif; }
.canvas .role { font: 400 32px Roboto, sans-serif; }
.comp-foot { flex: 1; border-top: 1px solid #080808; background: #272727; padding: 0 0 2px 6px; display: grid; align-items: center; grid-template-columns: 29px 27px 27px 96px 26px 30px 97px 29px 31px 24px 123px 24px 30px 146px 97px 32px 32px 28px 26px 7px 26px 40px; }
.comp-foot .vsep { height: 26px; }
.drop { height: 25px; margin-right: 4px; padding: 0 5px 0 7px; background: #1b1b1b; border: 1px solid #2d2d2d; border-radius: 3px; display: flex; align-items: center; justify-content: space-between; color: #c8c8c8; }
.comp-foot .drop:nth-child(11) { width: 117px; }
.comp-foot .drop:nth-child(15) { padding-right: 4px; }
.drop.time { width: 92px; justify-content: center; padding: 0 3px 0 0; color: #a3a3a3; font-size: 13.500px; letter-spacing: .5px; }
.fbtn { width: 28px; height: 25px; background: #141414; border: 1px solid #2b2b2b; border-radius: 3px; display: flex; align-items: center; justify-content: center; }

/* right column */
.side { display: flex; height: 629px; margin-top: 1px; padding-left: 6px; overflow: hidden; }
.stack { width: 273px; background: #262626; height: 629px; overflow: hidden; display: flex; flex-direction: column; }
.vscroll { flex: 1; background: #1e1e1e; padding: 306px 0 0 2px; border-right: 1px solid #161616; }
.vscroll i { display: block; width: 13px; height: 255px; border-radius: 7px; background: #303030; }
.effects { list-style: none; margin: 0; padding: 0; flex: none; }
.effects li { height: 22.700px; border-bottom: 1px solid #1e1e1e; display: flex; align-items: center; gap: 6px; padding: 1px 0 0 8px; }
.effects li:last-child { height: 24px; border-bottom: 2px solid #080808; }
.effects-foot { height: 26px; border-bottom: 1px solid #161616; border-right: 1px solid #0d0d0d; padding: 3px 8px 0; display: flex; justify-content: flex-end; flex: none; }
.paragraph { height: 204px; flex: none; border-bottom: 1px solid #161616; padding-left: 8px; }
.side-title { height: 43px; display: flex; align-items: center; justify-content: space-between; padding: 0 14px 0 7px; color: #c6c6c6; }
.aligns { height: 40px; width: 240px; border-bottom: 1px solid #303030; display: grid; grid-template-columns: 36px 34px 41px 33px 34px 39px 20px; align-items: center; padding-bottom: 5px; }
.abtn { width: 27px; height: 29px; background: #121212; border: 1px solid #2d2d2d; border-radius: 3px; display: flex; align-items: center; justify-content: center; }
.indents { display: grid; grid-template-columns: 29px 66px 31px 57px 30px 30px; align-items: center; height: 26px; color: #9c9c9c; }
.space-before { margin-top: 4px; }
.first-line { margin-top: -3px; }
.side b { color: #389ff0; }
.indents.second { height: 30px; grid-template-columns: 29px 66px 31px 57px 33px 30px; }
.indents.second span:nth-child(2) { margin-bottom: 11px; }
.indents.second span:nth-child(4) { margin-bottom: 6px; }
.indents.second > svg { margin-bottom: 2px; }
.indents.second > .dir { margin-top: 4px; }
.indents.second > .rtl { margin-top: 5px; margin-bottom: 0; }
.character { flex: none; padding-left: 6px; }
.character .side-title { padding-left: 9px; }
.fontrow { display: grid; grid-template-columns: 168px 33px 60px; padding-top: 8px; height: 72px; width: 260px; border-bottom: 1px solid #303030; }
.pick { height: 24px; width: 163px; background: #161616; border: 1px solid #2f2f2f; border-radius: 3px; color: #c9c9c9; display: flex; align-items: center; padding: 0 6px 0 8px; }
.pick span { flex: 1; }
.pick i { width: 1px; height: 22px; background: #2f2f2f; margin-right: 7px; }
.fontpicks { display: grid; grid-template-rows: 32px 24px; }
.dropper { display: grid; grid-template-rows: 32px 24px; padding: 2px 0 0 2px; }
.bw { width: 27px; height: 24px; margin-top: -2px; border: 1px solid #999; background: linear-gradient(#000 0 11px, #999 11px 12px, #fff 12px); }
.metrics { display: grid; grid-template-columns: 33px 60px 48px 42px 61px 10px; align-items: center; height: 34px; color: #9c9c9c; }
.leading { margin-top: 3px; }
.metrics.second { height: 32px; width: 260px; border-bottom: 1px solid #303030; padding-bottom: 9px; }
.metrics.second > svg:nth-child(1), .metrics.second > svg:nth-child(4) { align-self: start; }
.off { color: #5c5c5c; }
.strokes { display: grid; grid-template-columns: 33px 60px 14px 153px; align-items: center; height: 41px; width: 260px; border-bottom: 1px solid #303030; color: #9c9c9c; }
.strokes .pick { width: 153px; justify-content: flex-end; background: #1b1b1b; }
.scales { display: grid; grid-template-columns: 33px 60px 50px 40px 60px; padding-top: 9px; color: #9c9c9c; height: 30px; }
.scales > span { line-height: 18px; }
.scales > svg:nth-child(3) { margin-top: 4px; }

/* timeline */
.timeline { flex: none; height: 348px; background: #262626; display: grid; grid-template-columns: 933px 964px 23px; grid-template-rows: 329px 19px; }
.layers { border-left: 3px solid #1b1b1b; display: flex; flex-direction: column; }
.tl-rest { flex: 1; border-right: 1px solid #0a0a0a; }
.tl-tabs { height: 35px; display: flex; padding-left: 12px; }
.tl-tabs .tab { width: 223px; height: 35px; padding-top: 2px; }
.tl-tabs .tab .sw { margin: 0 14px 0 13px; }
.tl-tabs .tab svg:last-child { margin-left: 15px; }
.tl-tabs .lbl { margin-left: 50px; line-height: 37px; }
.tl-tools { height: 49px; display: grid; align-items: center; padding-left: 12px; grid-template-columns: 120px 550px 45px 46px 36px 35px 44px 24px; }
.clock { display: flex; flex-direction: column; color: #389ff0; padding-top: 1px; }
.clock strong { font-weight: 700; font-size: 19px; line-height: 20px; padding-left: 3px; letter-spacing: .15px; }
.clock small { font-size: 12.800px; line-height: 17px; color: #1670b4; letter-spacing: .2px; }
.tl-tools .field { width: 530px; padding-left: 8px; }
.tl-head { height: 27px; border-top: 1px solid #0a0a0a; border-bottom: 2px solid #0a0a0a; border-right: 1px solid #0a0a0a; background: #323232; padding-left: 7px; display: grid; align-items: center; grid-template-columns: 19px 23px 18px 23px 18px 24px 8px 36px 7px 167px 6px 22px 19px 20px 18px 21px 22px 19px 35px 8px 101px 23px 89px 8px 148px 10px; font-size: 12px; color: #9c9c9c; }
.tl-head em { font: italic 17px/18px "Noto Sans", sans-serif; color: #b4b4b4; letter-spacing: -1px; }
.tl-row { height: 22.500px; background: #2e2e2e; border-bottom: 1px solid #252525; border-right: 1px solid #0a0a0a; padding: 0 0 2px 5px; display: grid; align-items: center; grid-template-columns: 40px 20px 33px 15px 29px 40px 23px 150px 21px 20px 60px 19px 21px 41px 99px 25px 99px 25px 119px; }
.tl-row .sw { width: 16px; height: 16px; }
.tl-row b { font-weight: 700; }
.tl-row .ttype { font: 700 17px/18px "Liberation Serif", serif; }
.cell { width: 17px; height: 17px; background: #222; display: flex; align-items: center; justify-content: center; }
.flat { height: 19px; background: #1b1b1b; color: #d0d0d0; display: flex; align-items: center; justify-content: space-between; padding: 0 6px 0 8px; }
.tl-row > .flat:nth-child(15) { width: 92px; }
.flat.trk { width: 87px; }

.tracks { overflow: hidden; position: relative; padding: 44px 2px 0 1px; background: #262626; }
.navigator { height: 13px; display: flex; border-top: 1px solid #0a0a0a; border-bottom: 1px solid #0a0a0a; }
.handle { width: 9px; background: #2d8ceb; border-radius: 9px 0 0 9px; flex: none; }
.handle.end { border-radius: 0 9px 9px 0; }
.navigator .bar { width: 941px; margin: 0 1px; background: #696969; border-left: 2px solid #2d8ceb; }
.ruler { height: 26px; display: flex; margin-left: -37px; width: 1040px; }
.ruler span { width: 94.150px; flex: none; text-align: center; font-size: 13px; line-height: 21px; background: linear-gradient(#8f8f8f, #8f8f8f) center bottom / 1.500px 6px no-repeat; }
.workarea { height: 21px; display: flex; border-top: 1px solid #0a0a0a; border-bottom: 1px solid #0a0a0a; padding-left: 2px; }
.workarea .bar { width: 941px; margin: 0 1px; background: #606060; border-top: 1px solid #777; }
.workarea .handle { width: 7px; border-radius: 5px 0 0 5px; }
.workarea .handle.end { border-radius: 0 5px 5px 0; }
.cache { height: 7px; padding: 1px 9px 0 11px; border-bottom: 2px solid #0a0a0a; }
.cache i { display: block; height: 4px; background: #16c91e; }
.track { height: 22.500px; background: #2e2e2e; padding: 0 9px 0 11px; border-bottom: 1px solid #252525; }
.track i { display: block; height: 21px; background: #7c3a3a; border-top: 1px solid #8f4646; border-bottom: 1px solid #6a2d2d; }
.empty { height: 174px; padding: 0 9px 0 11px; }
.empty i { display: block; height: 173px; background: #333; }
.playhead { position: absolute; left: 3px; top: 63px; }

.rail { border-right: 2px solid #161616; display: flex; flex-direction: column; }
.rail-head { height: 111px; border-bottom: 2px solid #0a0a0a; display: flex; align-items: flex-end; padding: 0 0 3px 2px; }
.rail-body { flex: 1; background: #222; padding-top: 3px; }

.tl-foot { grid-column: 1 / -1; border-top: 2px solid #0a0a0a; border-left: 3px solid #1b1b1b; padding: 1px 0 0 8px; display: grid; grid-template-columns: 24px 24px 882px 29px 79px 22px; align-items: center; background: #232323; overflow: hidden; }
```
